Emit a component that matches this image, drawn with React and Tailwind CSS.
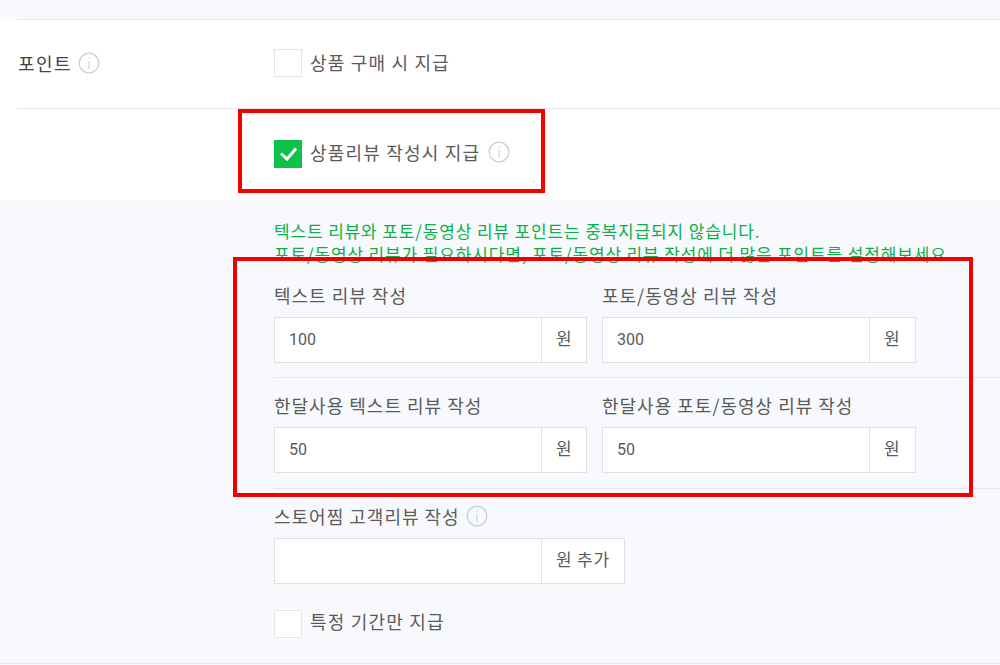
import React from "react";

const InfoIcon = ({ className = "" }) => (
  <svg viewBox="0 0 22 22" className={`w-[22px] h-[22px] shrink-0 ${className}`} fill="none">
    <circle cx="11" cy="11" r="9.8" stroke="#c9ced6" strokeWidth="1.3" />
    <rect x="10.5" y="9" width="1" height="8" fill="#c9ced6" />
    <rect x="10.5" y="5.5" width="1" height="1.6" fill="#c9ced6" />
  </svg>
);

const Checkbox = ({ checked }) =>
  checked ? (
    <span className="flex items-center justify-center w-[28px] h-[28px] bg-[#0cc24b]">
      <svg viewBox="0 0 28 28" className="w-[28px] h-[28px]" fill="none">
        <path d="M7 13.5l6 5.5 9-10.5" stroke="#fff" strokeWidth="3" />
      </svg>
    </span>
  ) : (
    <span className="block w-[28px] h-[28px] bg-white border border-[#e2e4e8]" />
  );

const Field = ({ label, value, unit = "원", unitWidth = "w-[45px]", info }) => (
  <div>
    <div className="flex items-center gap-[6px] h-[24px] pt-[2px] text-[18px] text-[#5a5a5a] tracking-[1px]">
      {label}
      {info && <InfoIcon />}
    </div>
    <div className="flex h-[46px] mt-[11px] bg-white border border-[#dfe1e5]">
      <div className="w-[267px] flex items-center pl-[14px] border-r border-[#dfe1e5] text-[16px] text-[#5a5a5a] font-['Roboto',sans-serif]">
        {value}
      </div>
      <div className={`${unitWidth} flex items-center pl-[14px] pb-[4px] text-[17px] text-[#5a5a5a] tracking-[0.8px]`}>{unit}</div>
    </div>
  </div>
);

export default function App() {
  return (
    <div className="relative h-[665px] overflow-hidden bg-[#f7f9fc] font-['Noto_Sans_CJK_KR',sans-serif]">
      <div className="h-[19px]" />
      <div className="bg-white h-[181px] pl-[17px]">
        <div className="flex items-center h-[90px] pb-[2px] border-y border-[#e5e8ec]">
          <div className="w-[257px] flex items-center gap-[6px] text-[18px] text-[#444] tracking-[1.5px] pl-[1px]">
            포인트
            <InfoIcon />
          </div>
          <div className="flex items-center gap-[8px] text-[18px] text-[#5a5a5a] tracking-[1.2px]">
            <Checkbox />
            <span className="pb-[2px]">상품 구매 시 지급</span>
          </div>
        </div>
        <div className="flex items-center gap-[8px] h-[90px] ml-[257px] text-[18px] text-[#5a5a5a] tracking-[1.2px]">
          <Checkbox checked />
          <span className="pb-[4px]">상품리뷰 작성시 지급</span>
          <InfoIcon className="-mt-[4px]" />
        </div>
      </div>

      <div className="pl-[274px] pt-[19px]">
        <p className="text-[17px] leading-[23px] text-[#0cb04a] tracking-[0.85px]">
          텍스트 리뷰와 포토/동영상 리뷰 포인트는 중복지급되지 않습니다.
          <br />
          포토/동영상 리뷰가 필요하시다면, 포토/동영상 리뷰 작성에 더 많은 포인트를 설정해보세요.
        </p>
        <div className="flex gap-[15px] mt-[17px]">
          <Field label="텍스트 리뷰 작성" value="100" unitWidth="w-[44px]" />
          <Field label="포토/동영상 리뷰 작성" value="300" />
        </div>
        <div className="border-t border-[#e5e8ec] mt-[14px]" />
        <div className="flex gap-[15px] mt-[14px]">
          <Field label="한달사용 텍스트 리뷰 작성" value="50" unitWidth="w-[44px]" />
          <Field label="한달사용 포토/동영상 리뷰 작성" value="50" />
        </div>
        <div className="border-t border-[#e5e8ec] mt-[15px]" />
        <div className="flex mt-[14px]">
          <Field label="스토어찜 고객리뷰 작성" value="" unit="원 추가" unitWidth="w-[82px]" info />
        </div>
        <div className="flex items-center gap-[8px] mt-[24px] text-[18px] text-[#5a5a5a] tracking-[1.2px]">
          <Checkbox />
          <span className="pb-[4px]">특정 기간만 지급</span>
        </div>
      </div>

      <div className="absolute left-0 right-0 top-[663px] border-t border-[#e5e8ec]" />

      <div className="absolute left-[238px] top-[109px] w-[307px] h-[84px] border-4 border-[#f00000]" />
      <div className="absolute left-[233px] top-[257px] w-[740px] h-[240px] border-4 border-[#f00000]" />
    </div>
  );
}
